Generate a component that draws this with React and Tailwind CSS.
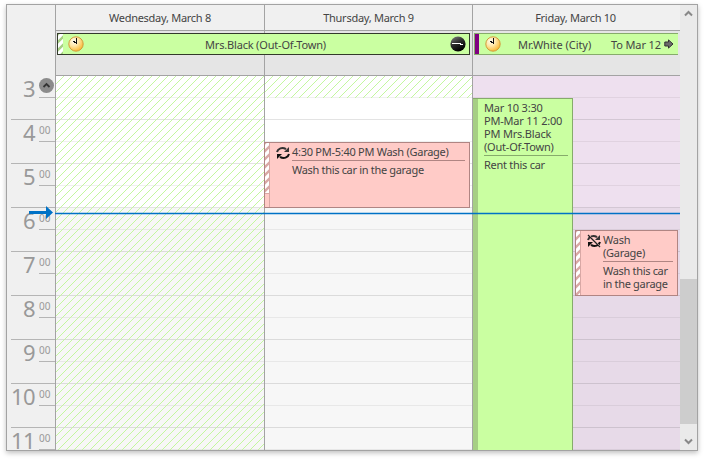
import React from "react";

const rows = Array.from({ length: 17 }, (_, i) => i);
const hours = [3, 4, 5, 6, 7, 8, 9, 10, 11];

const Clock = () => (
  <svg width="16" height="16" viewBox="0 0 16 16" className="shrink-0">
    <defs>
      <radialGradient id="face" cx="35%" cy="30%" r="75%">
        <stop offset="0" stopColor="#fffdf0" />
        <stop offset="0.45" stopColor="#ffe7a8" />
        <stop offset="1" stopColor="#f9b62c" />
      </radialGradient>
    </defs>
    <circle cx="8" cy="8" r="7.2" fill="url(#face)" stroke="#d39a3d" />
    <path d="M8.5 2v6M5 5.5h2M6 6.5h2" stroke="#111" fill="none" />
  </svg>
);

const DarkClock = () => (
  <svg width="16" height="16" viewBox="0 0 16 16" className="shrink-0">
    <defs>
      <linearGradient id="dark" x1="0" y1="0" x2="0.5" y2="1">
        <stop offset="0" stopColor="#858585" />
        <stop offset="0.5" stopColor="#2e2e2e" />
        <stop offset="1" stopColor="#000" />
      </linearGradient>
    </defs>
    <circle cx="8" cy="8" r="7.6" fill="url(#dark)" />
    <path d="M2 7.5h9M10 8.5h3" stroke="#fff" fill="none" />
  </svg>
);

const Recurrence = ({ crossed }) => (
  <svg width="14" height="14" viewBox="0 0 14 14" className="shrink-0">
    <path d="M1 6C1.8 2.6 6.2 0.6 10 3.2" stroke="#333" strokeWidth="2" fill="none" />
    <path d="M13 1v5H8z" fill="#333" />
    <path d="M13 8C12.2 11.4 7.8 13.4 4 10.8" stroke="#111" strokeWidth="2" fill="none" />
    <path d="M1 13V8h5z" fill="#111" />
    {crossed && (
      <>
        <path d="M2 1l12 12" stroke="#ffcbc7" strokeWidth="1" />
        <path d="M1 1l12 12" stroke="#222" strokeWidth="1.2" />
      </>
    )}
  </svg>
);

// diagonal lines 8px apart, the svg clips what runs outside the cells
const hatchPath = Array.from({ length: 73 }, (_, i) => `M${i * 8 + 8} 0l-374 374`).join("");

const Hatch = () => (
  <svg className="absolute inset-0 h-full w-full overflow-hidden">
    <path d={hatchPath} stroke="#c4f7a0" strokeWidth="1" fill="none" />
  </svg>
);

const Stripes = ({ id, color }) => (
  <svg className="h-full w-full">
    <defs>
      <pattern id={id} width="8" height="8" patternUnits="userSpaceOnUse">
        <path d="M-2 10L10 -2M-2 2L2 -2M6 10L10 6" stroke={color} strokeWidth="2.4" />
      </pattern>
    </defs>
    <rect width="100%" height="100%" fill="#fff" />
    <rect width="100%" height="100%" fill={`url(#${id})`} />
  </svg>
);

const Cells = ({ light, dark }) =>
  rows.map((i) => (
    <div
      key={i}
      className={`h-[22px] border-b ${i < 6 ? light : dark} ${
        i % 2 === 0 ? "border-black/6" : "border-black/11"
      }`}
    />
  ));

const DayHeader = ({ title, last }) => (
  <div className={`h-full pt-[6px] text-center ${last ? "w-[205px]" : "border-r border-[#a3a3a3]"}`}>
    {title}
  </div>
);

const App = () => {
  return (
    <div className="h-[459px] w-[704px] bg-white pt-1 pl-1.5 font-['Noto_Sans','Open_Sans',sans-serif] text-[11px] leading-[13px] tracking-[-0.27px] text-[#444]">
      <div className="relative flex h-[447px] w-[692px] overflow-hidden border border-[#a3a3a3] bg-[#f0f0f0] shadow-[0_2px_5px_rgba(0,0,0,0.25)]">
        {/* time ruler */}
        <div className="w-[49px] shrink-0 border-r border-[#a3a3a3] pt-[71px] text-[#999]">
          {hours.map((h, i) => (
            <div key={h} className="ml-1 flex h-11 flex-col border-b border-[#b5b5b5]">
              <div className="flex h-[22px] shrink-0">
                <div className="w-[24px] shrink-0 pt-[3px] text-right text-[22px] leading-[18px] tracking-[-0.6px]">{h}</div>
                <div className="ml-1 h-[22px] w-4 border-b border-[#b5b5b5]">
                  {i === 0 ? (
                    <div className="mt-[2px] flex h-[15px] w-[15px] items-center justify-center rounded-full bg-[#8b8b8b]">
                      <svg width="9" height="9" viewBox="0 0 9 9">
                        <path d="M1.5 6L4.5 3L7.5 6" fill="none" stroke="#333" strokeWidth="1.8" />
                      </svg>
                    </div>
                  ) : (
                    <div className="pt-[4px] text-[10px] leading-[13px] tracking-normal">00</div>
                  )}
                </div>
              </div>
            </div>
          ))}
        </div>

        {/* days */}
        <div className="w-[624px] shrink-0">
          <div className="flex h-[26px] border-b border-[#a3a3a3]">
            <div className="w-[209px]"><DayHeader title="Wednesday, March 8" /></div>
            <div className="w-[208px]"><DayHeader title="Thursday, March 9" /></div>
            <DayHeader title="Friday, March 10" last />
          </div>

          <div className="relative flex h-[45px] border-b border-[#a3a3a3] bg-[#e5e5e5]">
            <div className="w-[209px] border-r border-[#a3a3a3]" />
            <div className="w-[208px] border-r border-[#a3a3a3]" />
            <div className="absolute top-[2px] left-px flex h-[22px] w-[413px] items-center border border-[#333a2b] bg-[#caffa1]">
              <div className="h-full w-[5px]"><Stripes id="allday" color="#a6cf84" /></div>
              <div className="-mt-px ml-[5px]"><Clock /></div>
              <div className="flex-1 pr-[3px] text-center tracking-[-0.18px]">Mrs.Black (Out-Of-Town)</div>
              <div className="-mt-px mr-[3px]"><DarkClock /></div>
            </div>
            <div className="absolute top-[2px] left-[418px] flex h-[22px] w-[204px] items-center border-y border-l border-[#86ab6b] bg-[#caffa1]">
              <div className="h-full w-1 bg-[#800080]" />
              <div className="-mt-px ml-1.5"><Clock /></div>
              <div className="ml-[17px] whitespace-nowrap tracking-[-0.05px]">Mr.White (City)</div>
              <div className="mr-[3px] ml-auto whitespace-nowrap tracking-[-0.1px]">To Mar 12</div>
              <svg width="10" height="10" viewBox="0 0 10 10" className="mr-1">
                <path d="M.8 3h3.7V.9L9 5 4.5 9.1V7H.8z" fill="#6b6b6b" stroke="#333" />
              </svg>
            </div>
          </div>

          <div className="relative flex h-[374px]">
            <div className="relative w-[209px] border-r border-[#a3a3a3]">
              <Cells light="bg-white" dark="bg-[#f7f7f7]" />
              <Hatch />
            </div>
            <div className="relative w-[208px] border-r border-[#a3a3a3]">
              <Cells light="bg-white" dark="bg-[#f7f7f7]" />
              <div className="absolute top-0 left-0 h-[22px] w-full"><Hatch /></div>
            </div>
            <div className="w-[207px]">
              <Cells light="bg-[#eee0ef]" dark="bg-[#e7dae8]" />
            </div>

            <div className="absolute top-[66px] left-[208px] flex h-[66px] w-[206px] border border-[#b08583] bg-[#ffcbc7]">
              <div className="h-full w-[5px] border-r border-[#d9a8a5]">
                <div className="h-[51px] border-b border-[#d9a8a5]"><Stripes id="wash" color="#d9a8a5" /></div>
              </div>
              <div className="mt-[3px] ml-1.5"><Recurrence /></div>
              <div className="mt-[2px] ml-[2px] w-[173px] whitespace-nowrap">
                <div className="border-b border-[#b08583] pb-[2px]">4:30 PM-5:40 PM Wash (Garage)</div>
                <div className="pt-[2px] tracking-[-0.32px]">Wash this car in the garage</div>
              </div>
            </div>

            <div className="absolute top-[22px] left-[417px] flex h-[353px] w-[100px] border border-l-0 border-[#86ab6b] bg-[#caffa1]">
              <div className="w-[5px] bg-[#a6cf84]" />
              <div className="mt-[2px] ml-1.5 w-[84px] whitespace-nowrap">
                <div className="border-b border-[#86ab6b] pb-[2px] tracking-[-0.2px]">
                  <div>Mar 10 3:30</div>
                  <div>PM-Mar 11 2:00</div>
                  <div>PM Mrs.Black</div>
                  <div>(Out-Of-Town)</div>
                </div>
                <div className="pt-[2px]">Rent this car</div>
              </div>
            </div>

            <div className="absolute top-[154px] left-[519px] flex h-[66px] w-[103px] border border-[#b08583] bg-[#ffcbc7]">
              <div className="h-full w-[5px] border-r border-[#d9a8a5]"><Stripes id="wash2" color="#d9a8a5" /></div>
              <div className="mt-[3px] ml-1.5"><Recurrence crossed /></div>
              <div className="mt-[2px] ml-[2px] w-[70px] whitespace-nowrap">
                <div className="border-b border-[#b08583] pb-[2px]">
                  <div>Wash</div>
                  <div>(Garage)</div>
                </div>
                <div className="pt-[2px] tracking-[-0.32px]">
                  <div>Wash this car</div>
                  <div>in the garage</div>
                </div>
              </div>
            </div>

            {/* current time */}
            <div className="absolute top-[136px] -left-px h-[3px] w-[625px] border-y border-[#0072c6]/25 bg-[#0072c6] bg-clip-padding" />
            <svg width="24" height="13" viewBox="0 0 24 13" className="absolute top-[130px] -left-[27px]">
              <path d="M0 5h17V0l7 6.5-7 6.5V8H0z" fill="#0072c6" />
            </svg>
          </div>
        </div>

        {/* scrollbar */}
        <div className="flex w-[17px] flex-col bg-[#eaeaea]">
          <div className="flex h-[17px] items-center justify-center">
            <svg width="9" height="9" viewBox="0 0 9 9">
              <path d="M1 6.5L4.5 3L8 6.5" fill="none" stroke="#888" strokeWidth="2" />
            </svg>
          </div>
          <div className="mt-[257px] h-[145px] bg-[#cdcdcd]" />
          <div className="mt-[9px] flex h-[17px] items-center justify-center">
            <svg width="9" height="9" viewBox="0 0 9 9">
              <path d="M1 2.5L4.5 6L8 2.5" fill="none" stroke="#888" strokeWidth="2" />
            </svg>
          </div>
        </div>
      </div>
    </div>
  );
};

export default App;
